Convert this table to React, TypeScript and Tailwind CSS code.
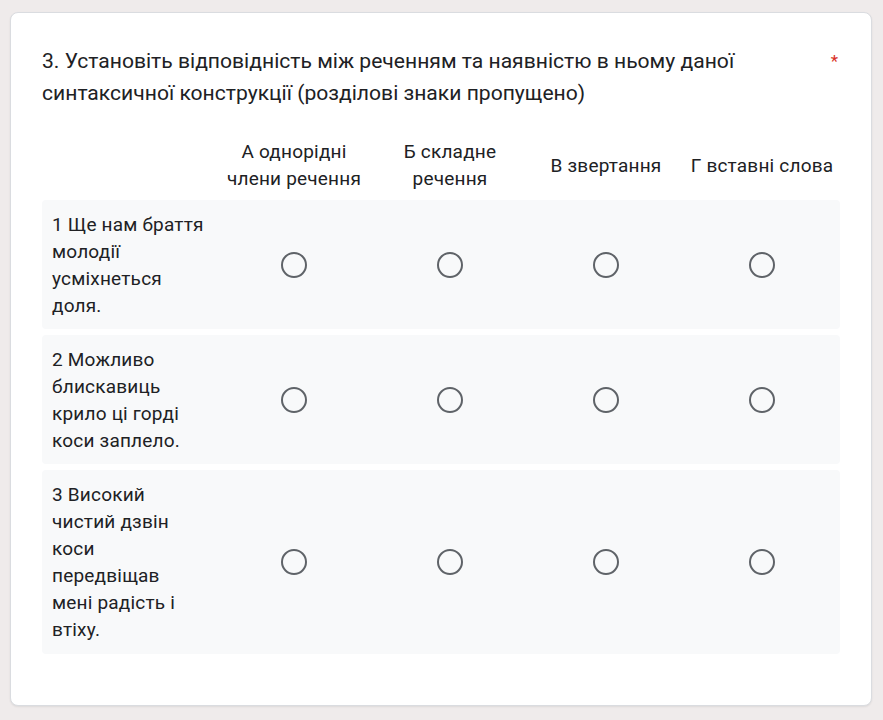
import React from "react";

const cols = ["А однорідні члени речення", "Б складне речення", "В звертання", "Г вставні слова"];
const rows = [
  { label: "1 Ще нам браття молодії усміхнеться доля.", h: "h-[129px]" },
  { label: "2 Можливо блискавиць крило ці горді коси заплело.", h: "h-[129px]" },
  { label: "3 Високий чистий дзвін коси передвіщав мені радість і втіху.", h: "h-[184px]" },
];

function Radio() {
  return <div className="w-[26px] h-[26px] rounded-full border-2 border-[#5f6368] box-border" />;
}

export default function App() {
  return (
    <div className="min-h-[720px] bg-[#efebeb] pt-3 px-[10px] pb-[14px]" style={{ fontFamily: "Roboto, 'Noto Sans', sans-serif" }}>
      <div className="w-[862px] bg-white border border-[#dadce0] rounded-lg px-[31px] pt-[32px] pb-[51px] shadow-[0_1px_2px_rgba(0,0,0,0.08)]">
        <div className="flex justify-between">
          <div className="text-[21.1px] leading-[32px] text-[#202124]">
            3. Установіть відповідність між реченням та наявністю в ньому даної
            <br />
            синтаксичної конструкції (розділові знаки пропущено)
          </div>
          <span className="text-[#d93025] text-[17px] leading-[24px] mt-[4px] mr-[2px]">*</span>
        </div>
        <div className="mt-[29px] flex">
          <div className="w-[174px] shrink-0" />
          {cols.map((c) => (
            <div key={c} className="flex-1 flex items-center justify-center text-center px-[4px] h-[54px] text-[19px] leading-[27px] text-[#202124] tracking-[0.2px]">
              {c}
            </div>
          ))}
        </div>
        <div className="mt-2 flex flex-col gap-[6px]">
          {rows.map((r) => (
            <div key={r.label} className={`${r.h} flex items-center bg-[#f8f9fa] rounded`}>
              <div className="w-[174px] shrink-0 pl-[10px] pr-[11px] text-[19px] leading-[27px] text-[#202124] tracking-[0.2px]">
                {r.label}
              </div>
              {cols.map((c) => (
                <div key={c} className="flex-1 flex justify-center">
                  <Radio />
                </div>
              ))}
            </div>
          ))}
        </div>
      </div>
    </div>
  );
}
